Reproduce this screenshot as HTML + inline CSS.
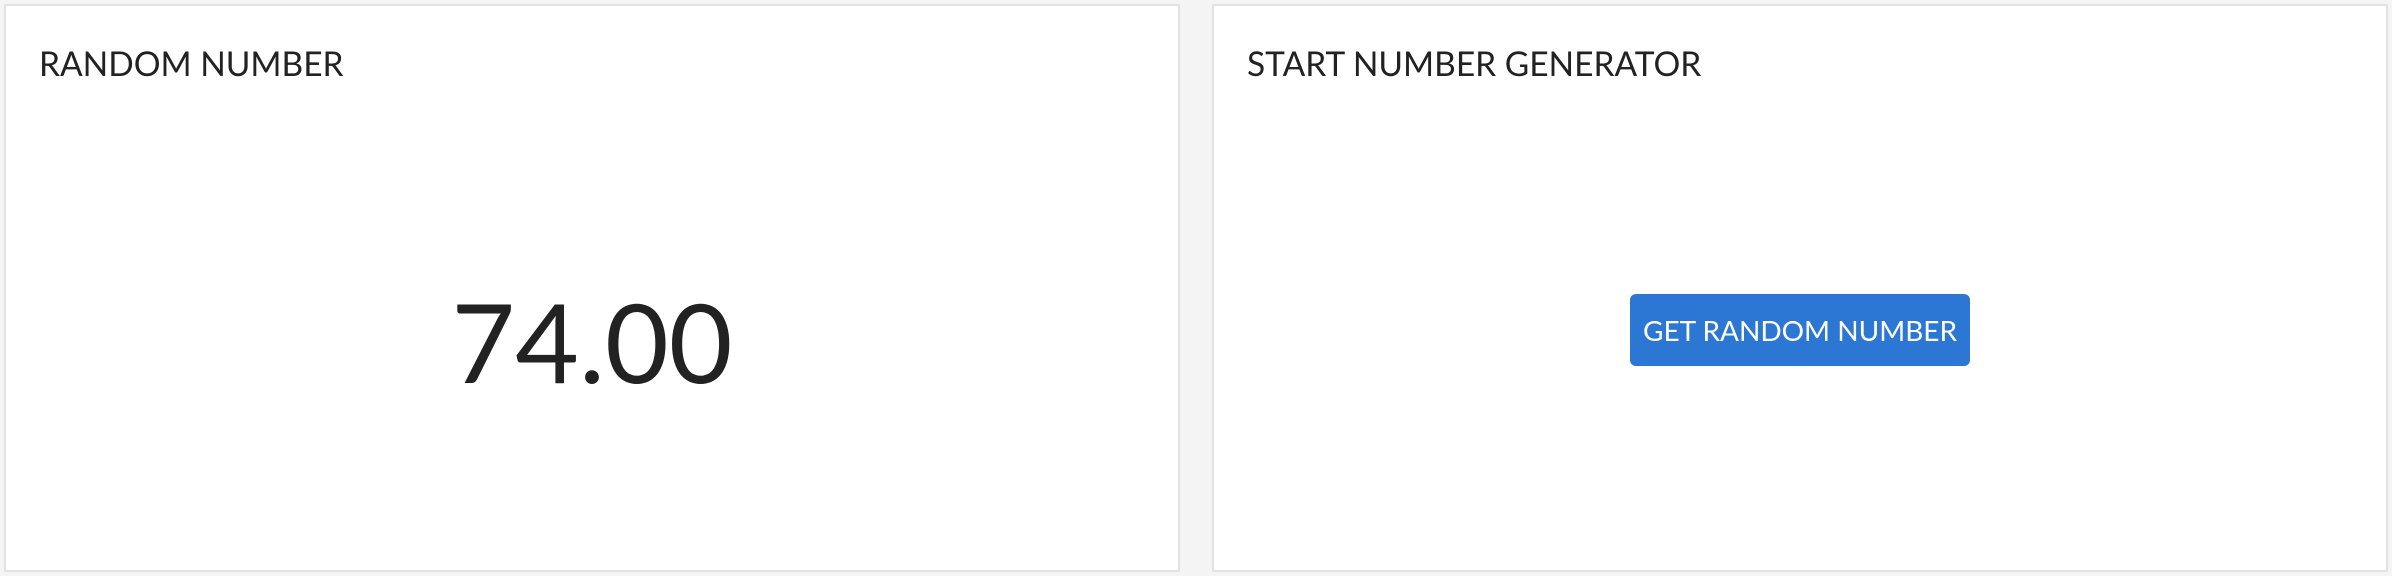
<!DOCTYPE html>
<html><head><style>
html,body{margin:0;padding:0;width:2392px;height:576px;background:#f4f4f4;overflow:hidden;font-family:"Lato","Liberation Sans",sans-serif;color:#222}
.card{position:absolute;top:4px;height:564px;background:#fff;border:2px solid #e2e2e2;box-sizing:content-box}
.t{position:absolute;left:33px;top:38px;font-size:33.5px;line-height:40px}
#c1{left:4px;width:1172px}
#c2{left:1212px;width:1172px}
.num{position:absolute;left:0;width:100%;text-align:center;top:270px;font-size:110px;line-height:130px}
.btn{position:absolute;left:416px;top:288px;width:340px;height:72px;background:#2d77d4;border-radius:6px;color:#fff;font-size:28px;line-height:72px;text-align:center}
</style></head><body>
<div class="card" id="c1"><div class="t">RANDOM NUMBER</div><div class="num">74.00</div></div>
<div class="card" id="c2"><div class="t">START NUMBER GENERATOR</div><div class="btn">GET RANDOM NUMBER</div></div>
</body></html>
